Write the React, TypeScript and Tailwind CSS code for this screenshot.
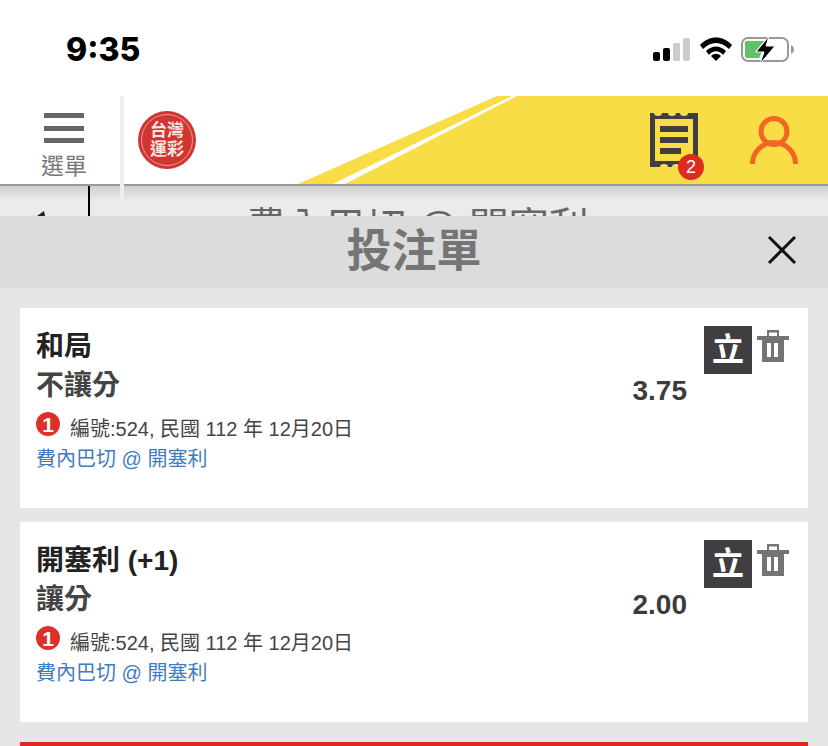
const font = { fontFamily: '"Liberation Sans", "Noto Sans CJK TC", sans-serif' };

function StatusBar() {
  return (
    <div className="relative h-24 bg-white">
      <div className="pt-[30px] pl-[66px] text-[32px] leading-[40px] font-extrabold text-black [font-family:Inter,sans-serif]">9:35</div>
      <div className="absolute left-[650px] top-[34px]">
        <svg width="150" height="32" viewBox="650 34 150 32">
          <rect x="653" y="52" width="7" height="9" rx="2" fill="#000" />
          <rect x="663" y="48" width="7" height="13" rx="2" fill="#000" />
          <rect x="673" y="43" width="7" height="18" rx="2" fill="#ccc" />
          <rect x="683" y="38" width="7" height="23" rx="2" fill="#ccc" />
          <path d="M700 45 C709 35 723 35 732 45 L729 49 C721 41 711 41 703 49 Z" fill="#000" />
          <path d="M706 51 C712 45 720 45 726 51 L723 55 C719 50 713 50 709 55 Z" fill="#000" />
          <path d="M711 56 C714 53 718 53 721 56 L716 61 Z" fill="#000" />
          <rect x="742" y="38" width="46" height="23" rx="6" fill="none" stroke="#999" strokeWidth="2" />
          <path d="M745 43 C745 41 746 41 748 41 H764 L755 52 H762 L759 58 H748 C746 58 745 58 745 56 Z" fill="#5fc26a" />
          <path d="M769 36 L756 52 H764 L760 64 L775 46 H766 Z" fill="#000" stroke="#fff" strokeWidth="1" />
          <path d="M791 45 C793 46 794 48 794 49.500 C794 51 793 53 791 54 Z" fill="#999" />
        </svg>
      </div>
    </div>
  );
}

function Logo() {
  return (
    <div className="relative flex h-[58px] w-[58px] items-center justify-center rounded-full bg-[#cf3531]">
      <div className="absolute inset-[3px] rounded-full border border-[#ee9c98]" />
      <div className="grid grid-cols-2 text-[17px] leading-[19px] font-bold text-[#fbe6e4]">
        <span>台</span>
        <span>灣</span>
        <span>運</span>
        <span>彩</span>
      </div>
    </div>
  );
}

function Header() {
  return (
    <div className="relative z-10 flex h-[90px] border-b-2 border-[#999] bg-white">
      <div className="absolute left-0 top-0 h-full w-full">
        <svg width="828" height="88" viewBox="0 96 828 88">
          <path d="M298 184 L497 96 H828 V184 Z" fill="#f9dd47" />
          <path d="M333 184 H345 L517 96 H512 Z" fill="#fff" />
        </svg>
      </div>
      <div className="relative flex w-[128px] flex-col items-center pt-[17px]">
        <div className="flex w-10 flex-col gap-[7.500px]">
          <div className="h-[5px] bg-[#666]" />
          <div className="h-[5px] bg-[#666]" />
          <div className="h-[5px] bg-[#666]" />
        </div>
        <div className="mt-[8px] text-[23px] leading-[30px] text-[#777]">選單</div>
      </div>
      <div className="absolute left-[120px] top-0 h-[104px] w-1 bg-[#eee]" />
      <div className="relative ml-[10px] mt-[15px]">
        <Logo />
      </div>
      <div className="absolute left-[650px] top-[17px]">
        <svg width="48" height="54" viewBox="0 0 48 54" fill="none">
          <path d="M0 0 H4 A4 3 0 0 0 12 0 H18 A4 3 0 0 0 26 0 H30 A4 3 0 0 0 38 0 H44 L48 0 V54 H44 A4 3 0 0 0 36 54 H30 A4 3 0 0 0 22 54 H18 A4 3 0 0 0 10 54 H4 L0 54 Z" fill="#3f3f41" />
          <rect x="5" y="6" width="38" height="42" fill="#f9dd47" />
          <rect x="10" y="13" width="28" height="6" fill="#3f3f41" />
          <rect x="10" y="24" width="28" height="6" fill="#3f3f41" />
          <rect x="10" y="35" width="21" height="6" fill="#3f3f41" />
        </svg>
      </div>
      <div className="absolute left-[678px] top-[58px] flex h-[26px] w-[26px] items-center justify-center rounded-full bg-[#de2b1f] text-[18px] leading-none text-white">2</div>
      <div className="absolute left-[750px] top-[20px]">
        <svg width="48" height="48" viewBox="0 0 48 48" fill="none" stroke="#f26522" strokeWidth="5">
          <circle cx="24" cy="15.500" r="13" />
          <path d="M2.500 48 A21.500 21.500 0 0 1 45.500 48" />
        </svg>
      </div>
    </div>
  );
}

function BehindPage() {
  return (
    <div className="relative h-[30px] overflow-hidden bg-gradient-to-b from-[#cfcfcf] to-[#ebebeb] to-[50%]">
      <div className="absolute left-[88px] top-0 h-full w-[2px] bg-black" />
      <svg className="absolute left-[30px] top-[24px]" width="20" height="8" viewBox="0 0 20 8">
        <path d="M14 1 L7 6 H15 Z" fill="#222" />
      </svg>
      <div className="pt-[19px] pl-[246px] text-[40px] leading-[44px] whitespace-nowrap text-[#666]">費內巴切 @ 開塞利</div>
    </div>
  );
}

function SheetHeader() {
  return (
    <div className="relative flex h-[72px] items-center justify-center bg-[#dcdcdc]">
      <div className="text-[45px] leading-[60px] font-bold text-[#757575]">投注單</div>
      <svg className="absolute left-[767px] top-[19px]" width="30" height="30" viewBox="0 0 30 30" stroke="#111" strokeWidth="3">
        <path d="M2 2 L28 28 M28 2 L2 28" />
      </svg>
    </div>
  );
}

function TrashIcon() {
  return (
    <svg width="32" height="32" viewBox="0 0 32 32" fill="#747474">
      <path d="M10 0 H22 V6 H32 V10 H0 V6 H10 Z M12 2.500 V6 H20 V2.500 Z" fillRule="evenodd" />
      <path d="M5 10 H27 V32 H5 Z M10 13 V27 H14 V13 Z M17 13 V27 H21 V13 Z" fillRule="evenodd" />
    </svg>
  );
}

interface Bet {
  pick: string;
  kind: string;
  odds: string;
}

function BetCard({ pick, kind, odds }: Bet) {
  return (
    <div className="flex h-[200px] bg-white pl-[16px] pr-[19px]">
      <div className="flex-1 pt-[20px]">
        <div className="text-[28px] leading-[38px] font-bold text-[#222]">{pick}</div>
        <div className="mt-[1px] text-[28px] leading-[38px] font-bold text-[#444]">{kind}</div>
        <div className="mt-[7px] flex items-start">
          <div className="flex h-6 w-6 items-center justify-center rounded-full bg-[#dd3029] text-[21px] leading-none font-bold text-white">1</div>
          <div className="ml-[10px] mt-[4px] text-[20px] leading-[26px] text-[#444]">編號:524, 民國 112 年 12月20日</div>
        </div>
        <div className="mt-[4px] text-[20px] leading-[26px] text-[#3f7bbf]">費內巴切 @ 開塞利</div>
      </div>
      <div className="mr-[17px] pt-[64px] text-[28px] leading-[38px] font-bold text-[#3c3c3c]">{odds}</div>
      <div className="flex items-start pt-[18px]">
        <div className="flex h-12 w-12 items-center justify-center bg-[#3f3f41] text-[32px] leading-none font-bold text-white">立</div>
        <div className="ml-[5px] mt-[4px]">
          <TrashIcon />
        </div>
      </div>
    </div>
  );
}

const bets: Bet[] = [
  { pick: '和局', kind: '不讓分', odds: '3.75' },
  { pick: '開塞利 (+1)', kind: '讓分', odds: '2.00' },
];

export default function App() {
  return (
    <div className="h-[746px] w-[828px] overflow-hidden bg-white" style={font}>
      <StatusBar />
      <Header />
      <BehindPage />
      <SheetHeader />
      <div className="h-[458px] bg-[#e6e6e6] px-5 pt-5">
        <div className="flex flex-col gap-[14px]">
          {bets.map(bet => (
            <BetCard key={bet.odds} {...bet} />
          ))}
        </div>
        <div className="mt-5 h-10 bg-[#de2b1f]" />
      </div>
    </div>
  );
}
